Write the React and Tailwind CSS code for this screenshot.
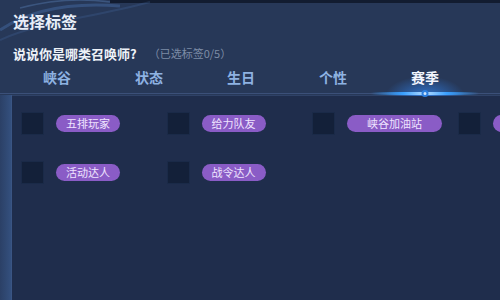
import React from "react";

const tabs = ["峡谷", "状态", "生日", "个性", "赛季"];

const rows = [
  [
    { label: "五排玩家", w: "w-[64px]" },
    { label: "给力队友", w: "w-[64px]" },
    { label: "峡谷加油站", w: "w-[95px]" },
    { label: "", w: "w-[64px]" },
  ],
  [
    { label: "活动达人", w: "w-[64px]" },
    { label: "战令达人", w: "w-[64px]" },
  ],
];

function Swoosh() {
  return (
    <svg
      className="absolute left-0 top-0"
      width="220"
      height="45"
      viewBox="0 0 220 45"
      fill="none"
    >
      <path d="M0 30 C30 10 70 2 120 6" stroke="#4f7fc0" strokeOpacity="0.35" strokeWidth="3" />
      <path d="M0 40 C40 22 90 18 150 2" stroke="#4f7fc0" strokeOpacity="0.2" strokeWidth="2" />
      <path d="M20 8 C50 0 80 -2 110 2" stroke="#6a98d6" strokeOpacity="0.3" strokeWidth="1.5" />
    </svg>
  );
}

export default function App() {
  return (
    <div
      className="relative w-[500px] h-[300px] overflow-hidden bg-[#273858] flex flex-col"
      style={{ fontFamily: '"Noto Sans CJK SC", "Noto Sans", sans-serif' }}
    >
      {/* top dark strip */}
      <div className="absolute left-[110px] right-0 top-0 h-[3px] bg-[#121c30]" />
      <Swoosh />

      {/* Header */}
      <div className="relative px-[13px] pt-[11px]">
        <h1 className="text-[16px] leading-[20px] font-bold text-[#e8eef8]">选择标签</h1>
        <div className="mt-[14px] flex items-center leading-[17px]">
          <span className="text-[13px] font-bold text-[#eef2f8]">说说你是哪类召唤师?</span>
          <span className="ml-[12px] text-[11px] text-[#7d8ca6]">（已选标签0/5）</span>
        </div>
      </div>

      {/* Tabs */}
      <div className="relative mt-[6px] h-[26px] pl-[11px] flex border-b border-[#3b5079]">
        {tabs.map((t, i) => {
          const active = i === tabs.length - 1;
          return (
            <div key={t} className="relative w-[92px] flex justify-center">
              {active && (
                <>
                  <div className="absolute left-[6px] right-[6px] top-[8px] h-[20px] bg-[radial-gradient(ellipse_at_bottom,rgba(50,140,255,0.7),rgba(50,140,255,0)_70%)]" />
                  <div className="absolute -left-[8px] -right-[8px] bottom-[-2px] h-[3px] bg-[linear-gradient(90deg,rgba(40,130,255,0),#3aa0ff_30%,#b5dcff_50%,#3aa0ff_70%,rgba(40,130,255,0))]" />
                  <div className="absolute left-1/2 -translate-x-1/2 bottom-[-4px] w-[7px] h-[7px] rounded-full bg-[#cfe6ff] border-2 border-[#2c7fe0]" />
                </>
              )}
              <span
                className={
                  "relative text-[14px] leading-[18px] font-bold " +
                  (active ? "text-[#f2f6ff]" : "text-[#8eb2e2]")
                }
              >
                {t}
              </span>
            </div>
          );
        })}
      </div>

      {/* Panel */}
      <div className="flex-1 flex mt-[1px]">
        <div className="w-[12px] shrink-0 bg-[linear-gradient(90deg,#2b4066,#34507e)] border-r border-[#3a5584]" />
        <div className="flex-1 min-w-0 overflow-hidden bg-[#1f2d4c] border-t border-[#2f4267] pt-[16px] pl-[9px] flex flex-col gap-[26px]">
          {rows.map((row, ri) => (
            <div key={ri} className="flex">
              {row.map((item, ci) => (
                <div key={ci} className="w-[145.5px] shrink-0 flex items-center gap-[12px]">
                  <div className="w-[23px] h-[23px] bg-[#132039] border border-[#1a2a48]" />
                  <div
                    className={
                      item.w +
                      " shrink-0 h-[17px] rounded-full bg-[#8a5cc6] flex items-center justify-center text-[11px] leading-none text-[#efe4ff]"
                    }
                  >
                    {item.label}
                  </div>
                </div>
              ))}
            </div>
          ))}
        </div>
      </div>
    </div>
  );
}
